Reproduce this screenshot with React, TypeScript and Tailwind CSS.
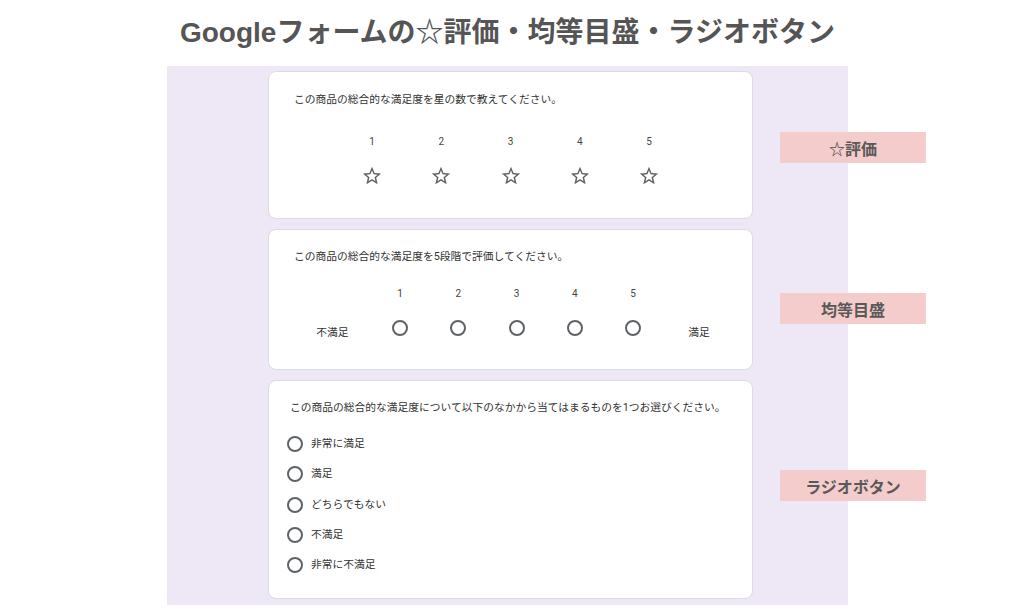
const jp = "font-['Roboto','Noto_Sans_CJK_JP',sans-serif]";

function StarIcon() {
  return (
    <svg width="22" height="22" viewBox="0 0 24 24" fill="#5f6368" aria-hidden>
      <path d="M22 9.24l-7.19-.62L12 2 9.19 8.63 2 9.24l5.46 4.73L5.82 21 12 17.27 18.18 21l-1.63-7.03L22 9.24zM12 15.4l-3.76 2.27 1-4.28-3.32-2.88 4.38-.38L12 6.1l1.71 4.04 4.38.38-3.32 2.88 1 4.28L12 15.4z" />
    </svg>
  );
}

function Radio() {
  return <span className="block h-4 w-4 shrink-0 rounded-full border-2 border-[#5f6368]" />;
}

function Card({ className, children }: { className: string; children: React.ReactNode }) {
  return (
    <div className={`w-[485px] rounded-lg border border-[#dadce0] bg-white ${className}`}>
      {children}
    </div>
  );
}

function Tag({ top, children }: { top: string; children: React.ReactNode }) {
  return (
    <div
      className={`absolute left-[780px] ${top} flex h-[31px] w-[146px] items-center justify-center bg-[#f4cccc] text-base font-bold text-[#595959] font-['Noto_Sans_CJK_JP',sans-serif]`}
    >
      {children}
    </div>
  );
}

const nums = [1, 2, 3, 4, 5];
const options = ["非常に満足", "満足", "どちらでもない", "不満足", "非常に不満足"];

export default function App() {
  return (
    <div className={`relative h-[615px] w-[1024px] bg-white ${jp}`}>
      <div className="ml-[167px] w-[681px]">
        <h1 className="flex h-[66px] items-center justify-center text-[28px] font-bold text-[#555] font-['Liberation_Sans','Noto_Sans_CJK_JP',sans-serif]">
          Googleフォームの☆評価・均等目盛・ラジオボタン
        </h1>
        <div className="flex h-[539px] flex-col items-start gap-[10px] bg-[#ede7f6] pl-[101px] pt-[5px]">
          <Card className="h-[148px] px-[25px] pt-[20px]">
            <p className="text-[10.75px] leading-4 text-[#333]">この商品の総合的な満足度を星の数で教えてください。</p>
            <div className="mt-[26px] flex justify-center">
              {nums.map((n) => (
                <div key={n} className="flex w-[69.25px] flex-col items-center">
                  <span className="text-[10px] leading-4 text-[#444]">{n}</span>
                  <span className="mt-[15px]"><StarIcon /></span>
                </div>
              ))}
            </div>
          </Card>
          <Card className="h-[141px] px-[25px] pt-[19px]">
            <p className="text-[10.75px] leading-4 text-[#333]">この商品の総合的な満足度を5段階で評価してください。</p>
            <div className="mt-[21px] flex items-end">
              <span className="w-[77px] shrink-0 text-center text-[10.75px] leading-4 text-[#333]">不満足</span>
              {nums.map((n) => (
                <div key={n} className="flex w-[58.25px] shrink-0 flex-col items-center">
                  <span className="text-[10px] leading-4 text-[#444]">{n}</span>
                  <span className="mb-[5px] mt-[18px]"><Radio /></span>
                </div>
              ))}
              <span className="w-[64px] shrink-0 pl-[26px] text-[10.75px] leading-4 text-[#333]">満足</span>
            </div>
          </Card>
          <Card className="h-[219px] px-[18px] pt-[19px]">
            <p className="pl-[3px] text-[10.75px] leading-4 text-[#333]">
              この商品の総合的な満足度について以下のなかから当てはまるものを1つお選びください。
            </p>
            <div className="mt-[20px] flex flex-col gap-[14.25px]">
              {options.map((o) => (
                <div key={o} className="flex h-4 items-center gap-[8px]">
                  <Radio />
                  <span className="text-[10.75px] leading-4 text-[#333]">{o}</span>
                </div>
              ))}
            </div>
          </Card>
        </div>
      </div>
      <Tag top="top-[132px]">☆評価</Tag>
      <Tag top="top-[293px]">均等目盛</Tag>
      <Tag top="top-[470px]">ラジオボタン</Tag>
    </div>
  );
}
